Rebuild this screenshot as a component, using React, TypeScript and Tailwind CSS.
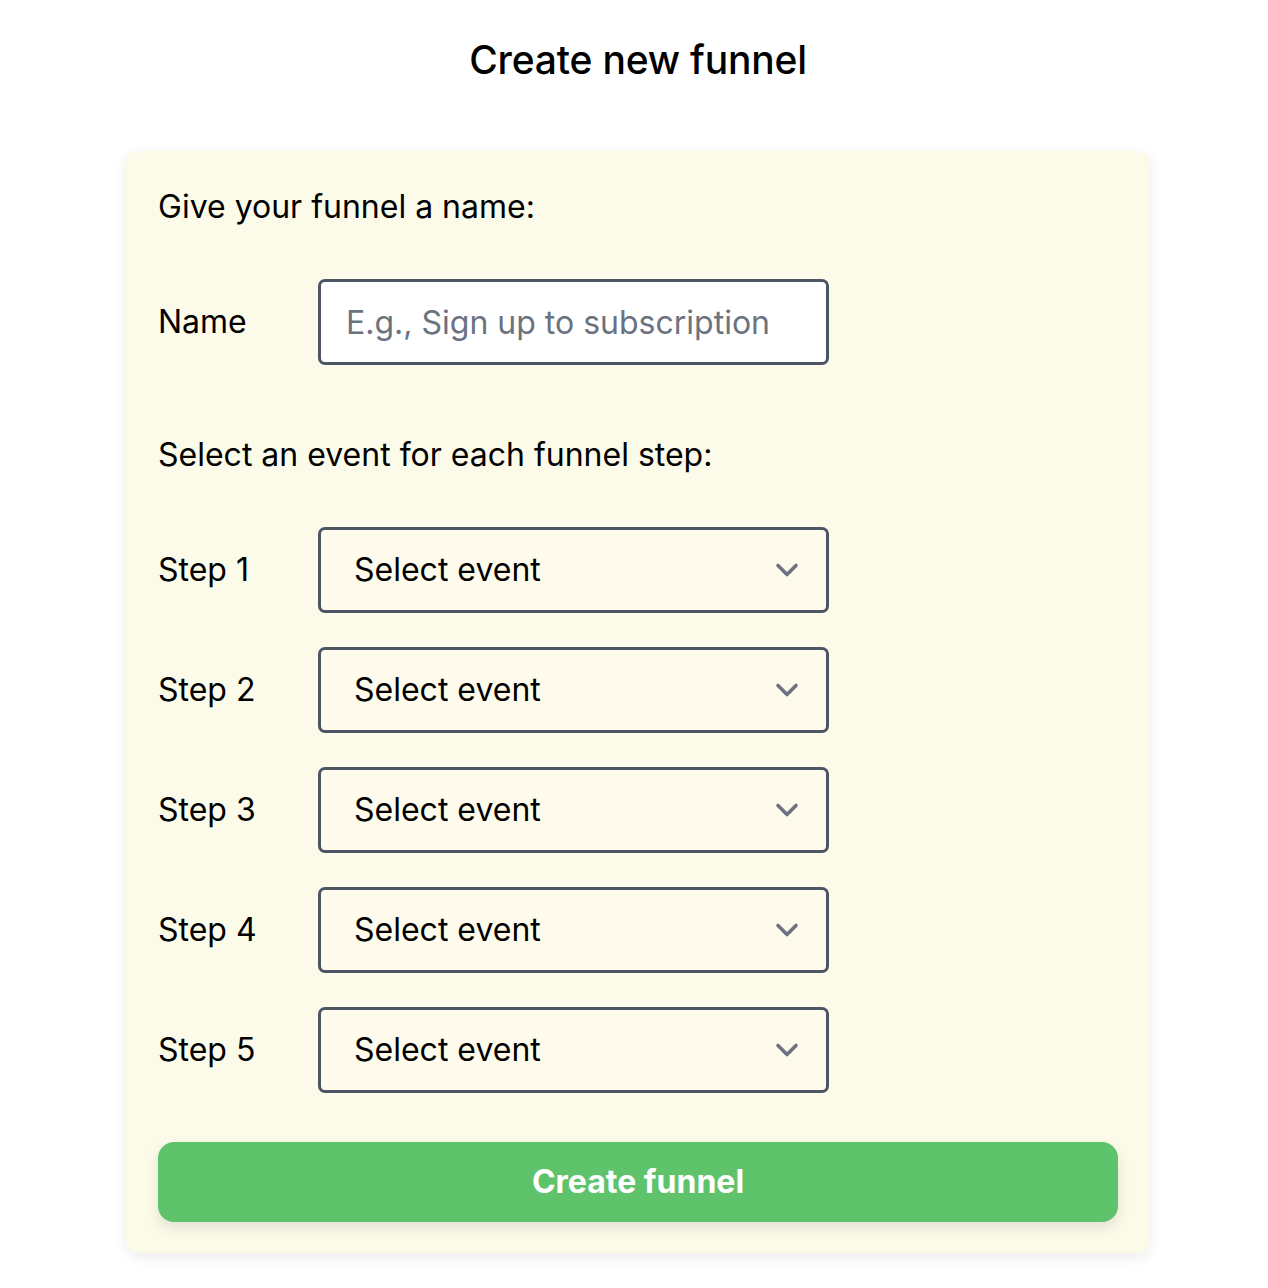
import { ChevronDown } from "lucide-react";

const steps = [1, 2, 3, 4, 5];

export default function App() {
  return (
    <div className="min-h-screen bg-white pl-[8px] font-['Inter',sans-serif] text-black">
      <h1 className="pt-[36px] text-center text-[39px] font-medium leading-[48px] tracking-[-0.2px]">
        Create new funnel
      </h1>

      <div className="mx-auto mt-[67px] w-[1024px] rounded-[12px] bg-[#fcfbea] px-[32px] pb-[31px] pt-[32px] shadow-[0_4px_14px_rgba(0,0,0,0.08)]">
        <p className="text-[32px] leading-[48px]">Give your funnel a name:</p>

        <div className="mt-[48px] flex items-center">
          <label className="w-[160px] text-[32px]">Name</label>
          <input
            placeholder="E.g., Sign up to subscription"
            className="h-[86px] w-[511px] rounded-[7px] border-[3px] border-[#4b5563] bg-white px-[25px] text-[32px] text-black outline-none placeholder:text-[#6b7280]"
          />
        </div>

        <p className="mt-[66px] text-[32px] leading-[48px]">
          Select an event for each funnel step:
        </p>

        <div className="mt-[48px] flex flex-col gap-[34px]">
          {steps.map((n) => (
            <div key={n} className="flex items-center">
              <span className="w-[160px] text-[32px]">Step {n}</span>
              <div className="flex h-[86px] w-[511px] items-center justify-between rounded-[7px] border-[3px] border-[#4b5563] bg-[#fffbec] pl-[33px] pr-[21px]">
                <span className="text-[32px]">Select event</span>
                <ChevronDown className="h-[36px] w-[36px] text-[#6b7280]" strokeWidth={2.4} />
              </div>
            </div>
          ))}
        </div>

        <button className="mt-[49px] flex h-[80px] w-full items-center justify-center rounded-[16px] bg-[#5fc36b] text-[32px] font-bold text-white shadow-[0_6px_14px_rgba(0,0,0,0.1)]">
          Create funnel
        </button>
      </div>
    </div>
  );
}
